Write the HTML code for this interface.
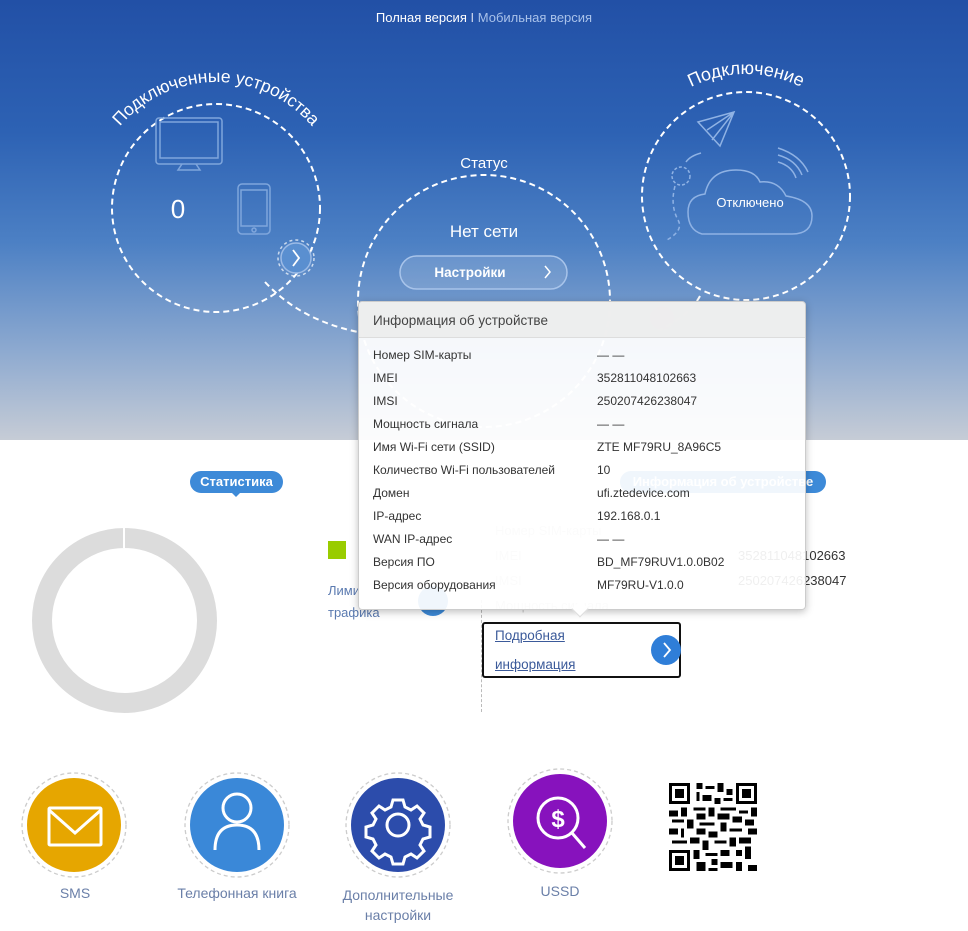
<!DOCTYPE html>
<html><head><meta charset="utf-8">
<style>
*{margin:0;padding:0;box-sizing:border-box}
body{width:968px;height:931px;overflow:hidden;background:#fff;font-family:"Liberation Sans",sans-serif;position:relative}
.top{position:absolute;left:0;top:0;width:968px;height:440px;background:linear-gradient(180deg,#2250a6 0%,#2d62b4 30%,#4c80c4 55%,#8eaad0 80%,#c6ccd6 100%)}
.abs{position:absolute}
.pop{position:absolute;z-index:10;left:358px;top:301px;width:448px;height:309px;background:rgba(255,255,255,0.92);border:1px solid #ccc;border-radius:4px;box-shadow:0 2px 8px rgba(0,0,0,.25);font-size:12px;color:#333}
.pop .hd{height:36px;background:rgba(236,236,236,0.9);border-bottom:1px solid #ddd;padding:11px 14px;font-size:13.5px;color:#444;border-radius:4px 4px 0 0}
.row{position:absolute;left:14px;width:420px;height:20px}
.row span{position:absolute;top:0}
.row span.v{left:224px}
.lbl{position:absolute;color:#6a7fa8;font-size:14px;text-align:center;width:140px}
</style></head><body>
<div class="top"></div>
<div class="abs" style="left:0;top:10px;width:968px;text-align:center;font-size:13px;color:#fff">Полная версия <span style="color:#cfd8ee">I</span> <span style="color:#a9c2ea">Мобильная версия</span></div>

<svg class="abs" style="left:0;top:0" width="968" height="440">
<defs>
<path id="pl" d="M90,208 A126,126 0 0 1 342,208"/>
<path id="pr" d="M624,196 A122,122 0 0 1 868,196"/>
</defs>
<g fill="none" stroke="#fff" stroke-width="2" stroke-dasharray="6,4">
<circle cx="216" cy="208" r="104"/>
<circle cx="484" cy="301" r="126"/>
<circle cx="746" cy="196" r="104"/>
<path d="M265,282 Q300,320 358,332"/>
<path d="M700,296 Q690,315 660,330"/>
</g>
<text font-family="Liberation Sans" font-size="17.5" fill="#fff"><textPath href="#pl" startOffset="50%" text-anchor="middle">Подключенные устройства</textPath></text>
<text font-family="Liberation Sans" font-size="18" fill="#fff"><textPath href="#pr" startOffset="50%" text-anchor="middle">Подключение</textPath></text>
<g fill="none" stroke="#7fa6dc" stroke-width="1.5">
<rect x="156" y="118" width="66" height="46" rx="3"/>
<rect x="160" y="122" width="58" height="36"/>
<path d="M182,164 L178,170 L200,170 L196,164"/>
<rect x="238" y="184" width="32" height="50" rx="4"/>
<rect x="241" y="190" width="26" height="36"/>
<circle cx="254" cy="230" r="2"/>
</g>
<text x="178" y="218" font-family="Liberation Sans" font-size="26" fill="#fff" text-anchor="middle">0</text>
<circle cx="296" cy="258" r="18" fill="none" stroke="#fff" stroke-width="1.5" stroke-dasharray="3,3" opacity=".7"/>
<circle cx="296" cy="258" r="15" fill="#5a8fd0" stroke="#9cbbe6" stroke-width="1.5"/>
<path d="M293,250 L299,258 L293,266" fill="none" stroke="#fff" stroke-width="1.8"/>
<text x="484" y="168" font-family="Liberation Sans" font-size="15" fill="#fff" text-anchor="middle">Статус</text>
<text x="484" y="237" font-family="Liberation Sans" font-size="17" fill="#fff" text-anchor="middle">Нет сети</text>
<rect x="400" y="256" width="167" height="33" rx="16.5" fill="rgba(255,255,255,0.12)" stroke="#a8c4ea" stroke-width="1.5"/>
<text x="470" y="277" font-family="Liberation Sans" font-size="13.5" font-weight="bold" fill="#fff" text-anchor="middle">Настройки</text>
<path d="M545,266 L550,272 L545,278" fill="none" stroke="#fff" stroke-width="1.5"/>
<g fill="none" stroke="#8fb2e4" stroke-width="1.5">
<path d="M698,122 L734,112 L720,146 Z M707,130 L734,112 L712,140"/>
<path d="M701,153 Q690,156 686,162"/>
<circle cx="681" cy="176" r="9" stroke-dasharray="3,2"/>
<path d="M675,186 Q670,205 678,220 Q684,230 667,240" stroke-dasharray="4,3"/>
<path d="M702,234 Q688,230 688,212 Q688,196 705,194 Q710,170 736,170 Q755,170 760,182 Q778,180 786,196 Q812,200 812,216 Q812,234 792,234 Z"/>
<path d="M778,148 Q800,155 808,172 M778,155 Q796,160 802,175 M778,162 Q792,166 796,178"/>
</g>
<text x="750" y="207" font-family="Liberation Sans" font-size="13" fill="#fff" text-anchor="middle">Отключено</text>
<circle cx="662" cy="318" r="12" fill="#e86a5a" opacity=".5"/>
</svg>

<div class="pop">
<div class="hd">Информация об устройстве</div>
<div class="row" style="top:46px"><span>Номер SIM-карты</span><span class="v">— —</span></div>
<div class="row" style="top:69px"><span>IMEI</span><span class="v">352811048102663</span></div>
<div class="row" style="top:92px"><span>IMSI</span><span class="v">250207426238047</span></div>
<div class="row" style="top:115px"><span>Мощность сигнала</span><span class="v">— —</span></div>
<div class="row" style="top:138px"><span>Имя Wi-Fi сети (SSID)</span><span class="v">ZTE MF79RU_8A96C5</span></div>
<div class="row" style="top:161px"><span>Количество Wi-Fi пользователей</span><span class="v">10</span></div>
<div class="row" style="top:184px"><span>Домен</span><span class="v">ufi.ztedevice.com</span></div>
<div class="row" style="top:207px"><span>IP-адрес</span><span class="v">192.168.0.1</span></div>
<div class="row" style="top:230px"><span>WAN IP-адрес</span><span class="v">— —</span></div>
<div class="row" style="top:253px"><span>Версия ПО</span><span class="v">BD_MF79RUV1.0.0B02</span></div>
<div class="row" style="top:276px"><span>Версия оборудования</span><span class="v">MF79RU-V1.0.0</span></div>
</div>
<div class="abs" style="z-index:11;left:574px;top:603px;width:12px;height:12px;background:#fff;transform:rotate(45deg);border-right:1px solid #ddd;border-bottom:1px solid #ddd"></div>

<div class="abs" style="left:190px;top:471px;width:93px;height:22px;background:#3d8ad8;border-radius:11px;color:#fff;font-size:13px;font-weight:bold;text-align:center;line-height:22px">Статистика</div>
<div class="abs" style="left:231px;top:492px;border:5px solid transparent;border-top-color:#3d8ad8"></div>
<div class="abs" style="left:32px;top:528px;width:185px;height:185px;border-radius:50%;border:20px solid #dcdcdc"></div>
<div class="abs" style="left:123px;top:528px;width:2px;height:20px;background:#fff"></div>
<div class="abs" style="left:328px;top:541px;width:18px;height:18px;background:#9c0"></div>
<div class="abs" style="left:328px;top:580px;font-size:13px;color:#5a7ab0;line-height:22px">Лими<br>трафика</div>
<div class="abs" style="left:418px;top:586px;width:30px;height:30px;border-radius:50%;background:#3d8ad8"></div>
<div class="abs" style="left:620px;top:471px;width:206px;height:22px;background:#3d8ad8;border-radius:11px;color:#fff;font-size:13px;font-weight:bold;text-align:center;line-height:22px">Информация об устройстве</div>
<div class="abs" style="left:495px;top:518px;font-size:13px;color:#ccc;line-height:25px">Номер SIM-карты<br>IMEI<br>IMSI<br>Мощность сигнала</div>
<div class="abs" style="left:738px;top:543px;font-size:13px;color:#333;line-height:25px">352811048102663<br>250207426238047</div>
<div class="abs" style="left:481px;top:600px;height:112px;border-left:1px dashed #bbb"></div>
<div class="abs" style="left:482px;top:622px;width:199px;height:56px;border:2px solid #111;border-radius:3px"></div>
<div class="abs" style="left:495px;top:621px;font-size:13.5px;color:#3b5a9a;text-decoration:underline;line-height:29px">Подробная<br>информация</div>
<svg class="abs" style="left:650px;top:634px" width="32" height="32"><circle cx="16" cy="16" r="15" fill="#2f7ed8"/><path d="M14,9 L20,16 L14,23" fill="none" stroke="#fff" stroke-width="1.8"/></svg>

<svg class="abs" style="left:0;top:765px" width="660" height="120">
<g fill="none" stroke="#ccc" stroke-width="1.3" stroke-dasharray="4,3">
<circle cx="74" cy="60" r="52"/><circle cx="237" cy="60" r="52"/><circle cx="398" cy="60" r="52"/><circle cx="560" cy="56" r="52"/>
</g>
<circle cx="74" cy="60" r="47" fill="#e6a600"/>
<circle cx="237" cy="60" r="47" fill="#3a88d8"/>
<circle cx="398" cy="60" r="47" fill="#2c4cab"/>
<circle cx="560" cy="56" r="47" fill="#8712bd"/>
<g fill="none" stroke="#fff" stroke-width="3">
<rect x="49" y="43" width="52" height="37" rx="1"/>
<path d="M49,45 L75,68 L101,45"/>
<circle cx="237" cy="43" r="14"/>
<path d="M215,85 Q215,60 237,60 Q259,60 259,85"/>
<circle cx="398" cy="60" r="11"/>
<path d="M393,35 h10 l2,7 l6,3 l6,-4 l7,7 l-4,6 l3,6 l7,2 v10 l-7,2 l-3,6 l4,6 l-7,7 l-6,-4 l-6,3 l-2,7 h-10 l-2,-7 l-6,-3 l-6,4 l-7,-7 l4,-6 l-3,-6 l-7,-2 v-10 l7,-2 l3,-6 l-4,-6 l7,-7 l6,4 l6,-3 z"/>
<circle cx="558" cy="53" r="20"/>
<path d="M572,68 L585,83"/>
</g>
<text x="558" y="62" font-family="Liberation Sans" font-size="24" font-weight="bold" fill="#fff" text-anchor="middle">$</text>
</svg>
<div class="lbl" style="left:5px;top:885px">SMS</div>
<div class="lbl" style="left:167px;top:885px">Телефонная книга</div>
<div class="lbl" style="left:328px;top:885px;line-height:20px">Дополнительные<br>настройки</div>
<div class="lbl" style="left:490px;top:883px">USSD</div>

<svg class="abs" style="left:669px;top:783px" width="88" height="88" viewBox="0 0 29 29" shape-rendering="crispEdges">
<g fill="#000"><path d="M0,0h7v7h-7z M22,0h7v7h-7z M0,22h7v7h-7z"/></g>
<g fill="#fff"><path d="M1,1h5v5h-5z M23,1h5v5h-5z M1,23h5v5h-5z"/></g>
<g fill="#000"><path d="M2,2h3v3h-3z M24,2h3v3h-3z M2,24h3v3h-3z"/>
<path d="M9,0h2v2h-2z M12,1h3v1h-3z M16,0h2v3h-2z M19,2h2v2h-2z M9,3h1v3h-1z M11,4h3v2h-3z M15,5h2v2h-2z M18,5h3v1h-3z M8,8h4v1h-4z M13,8h2v3h-2z M17,8h5v1h-5z M0,9h3v2h-3z M4,8h2v3h-2z M23,9h3v1h-3z M27,8h2v3h-2z M9,10h3v2h-3z M16,10h4v2h-4z M21,11h3v2h-3z M1,12h4v1h-4z M6,12h2v3h-2z M10,13h5v1h-5z M17,13h2v3h-2z M25,12h3v2h-3z M0,15h3v2h-3z M4,15h1v3h-1z M9,15h3v2h-3z M13,16h3v2h-3z M20,15h4v1h-4z M26,15h3v2h-3z M1,19h5v1h-5z M7,18h3v2h-3z M11,19h2v3h-2z M15,19h4v1h-4z M20,18h2v3h-2z M23,18h4v2h-4z M8,22h2v3h-2z M12,23h4v1h-4z M17,22h3v2h-3z M22,22h2v2h-2z M25,21h2v4h-2z M9,26h3v3h-3z M14,25h2v2h-2z M17,26h4v2h-4z M22,26h2v3h-2z M26,27h3v2h-3z M13,28h3v1h-3z"/></g>
</svg>
</body></html>
